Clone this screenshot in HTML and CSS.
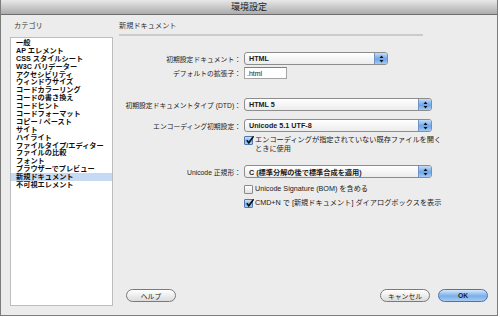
FILE: index.html
```html
<!DOCTYPE html>
<html lang="ja">
<head>
    <meta charset="UTF-8">
    <title>環境設定</title>
    <link rel="stylesheet" href="styles.css">
</head>
<body>
    <div class="window">
        <div class="titlebar">環境設定</div>
        <div class="content">
            <div class="sidebar">
                <div class="sidebar-title">カテゴリ</div>
                <ul class="category-list">
                    <li>一般</li>
                    <li>AP エレメント</li>
                    <li>CSS スタイルシート</li>
                    <li>W3C バリデーター</li>
                    <li>アクセシビリティ</li>
                    <li>ウィンドウサイズ</li>
                    <li>コードカラーリング</li>
                    <li>コードの書き換え</li>
                    <li>コードヒント</li>
                    <li>コードフォーマット</li>
                    <li>コピー / ペースト</li>
                    <li>サイト</li>
                    <li>ハイライト</li>
                    <li>ファイルタイプ/エディター</li>
                    <li>ファイルの比較</li>
                    <li>フォント</li>
                    <li>ブラウザーでプレビュー</li>
                    <li class="selected">新規ドキュメント</li>
                    <li>不可視エレメント</li>
                </ul>
            </div>
            <div class="panel">
                <div class="panel-title">新規ドキュメント</div>
                <div class="separator"></div>

                <div class="row row-doc">
                    <label>初期設定ドキュメント：</label>
                    <div class="select short"><span>HTML</span><i class="stepper"><svg width="5" height="8" viewBox="0 0 5 8"><path d="M2.5 0.5 L4.5 3 L0.5 3 Z M0.5 5 L4.5 5 L2.5 7.5 Z" fill="#111"/></svg></i></div>
                </div>
                <div class="row row-ext">
                    <label>デフォルトの拡張子：</label>
                    <div class="textbox">.html</div>
                </div>
                <div class="row row-dtd">
                    <label>初期設定ドキュメントタイプ (DTD)：</label>
                    <div class="select"><span>HTML 5</span><i class="stepper"><svg width="5" height="8" viewBox="0 0 5 8"><path d="M2.5 0.5 L4.5 3 L0.5 3 Z M0.5 5 L4.5 5 L2.5 7.5 Z" fill="#111"/></svg></i></div>
                </div>
                <div class="row row-enc">
                    <label>エンコーディング初期設定：</label>
                    <div class="select"><span>Unicode 5.1 UTF-8</span><i class="stepper"><svg width="5" height="8" viewBox="0 0 5 8"><path d="M2.5 0.5 L4.5 3 L0.5 3 Z M0.5 5 L4.5 5 L2.5 7.5 Z" fill="#111"/></svg></i></div>
                </div>
                <div class="check-row check-enc">
                    <i class="checkbox checked"><svg width="9" height="9" viewBox="0 0 9 9"><path d="M1.8 4.2 L3.8 6.8 L8.6 0.2" fill="none" stroke="#111" stroke-width="1.6"/></svg></i>
                    <span>エンコーディングが指定されていない既存ファイルを開く<br>ときに使用</span>
                </div>
                <div class="row row-norm">
                    <label>Unicode 正規形：</label>
                    <div class="select"><span>C (標準分解の後で標準合成を適用)</span><i class="stepper"><svg width="5" height="8" viewBox="0 0 5 8"><path d="M2.5 0.5 L4.5 3 L0.5 3 Z M0.5 5 L4.5 5 L2.5 7.5 Z" fill="#111"/></svg></i></div>
                </div>
                <div class="check-row check-bom">
                    <i class="checkbox"></i>
                    <span>Unicode Signature (BOM) を含める</span>
                </div>
                <div class="check-row check-cmd">
                    <i class="checkbox checked"><svg width="9" height="9" viewBox="0 0 9 9"><path d="M1.8 4.2 L3.8 6.8 L8.6 0.2" fill="none" stroke="#111" stroke-width="1.6"/></svg></i>
                    <span>CMD+N で [新規ドキュメント] ダイアログボックスを表示</span>
                </div>

                <div class="buttons">
                    <button class="btn">ヘルプ</button>
                    <div class="btn-group">
                        <button class="btn">キャンセル</button>
                        <button class="btn btn-ok">OK</button>
                    </div>
                </div>
            </div>
        </div>
    </div>
</body>
</html>
```

FILE: styles.css
```css
body {
    margin: 0;
    background-color: #ffffff;
    font-family: "Liberation Sans", "Noto Sans CJK JP", sans-serif;
    color: #1a1a1a;
}
.window {
    width: 496px;
    height: 315px;
    border: 1px solid #7c7c7c;
    border-top: none;
    background-color: #ececec;
    display: flex;
    flex-direction: column;
}
.titlebar {
    height: 14px;
    line-height: 14px;
    text-align: center;
    font-size: 9px;
    color: #222;
    background: linear-gradient(#e8e8e8, #acacac);
    border-bottom: 1px solid #6e6e6e;
}
.content {
    flex: 1;
    display: flex;
}
.sidebar {
    width: 103px;
    padding-left: 9px;
    display: flex;
    flex-direction: column;
}
.sidebar-title {
    height: 16px;
    padding: 6px 0 0 4px;
    font-size: 7.2px;
    line-height: 10px;
    color: #333;
}
.category-list {
    flex: 1;
    list-style: none;
    margin: 0 0 9px 0;
    padding: 1px 0 0 0;
    background-color: #fff;
    border: 1px solid #bdbdbd;
}
.category-list li {
    height: 7.9px;
    line-height: 7.9px;
    padding-left: 5px;
    font-size: 7.2px;
    font-weight: bold;
    color: #111;
    white-space: nowrap;
}
.category-list li.selected {
    background-color: #c6daf3;
}
.panel {
    flex: 1;
    padding: 0 9px 0 6px;
    display: flex;
    flex-direction: column;
}
.panel-title {
    height: 13px;
    padding-top: 6px;
    font-size: 7.2px;
    line-height: 10px;
    color: #333;
}
.separator {
    width: 304px;
    height: 2px;
    background-color: #cbcbcb;
}
.row {
    display: flex;
    align-items: center;
    height: 13px;
}
.row label {
    width: 122px;
    margin-right: 3px;
    text-align: right;
    font-size: 6.8px;
    white-space: nowrap;
    color: #222;
}
.row-doc { margin-top: 16px; }
.row-ext { margin-top: 2px; height: 12px; }
.row-dtd { margin-top: 19px; }
.row-enc { margin-top: 8px; }
.row-norm { margin-top: 12px; }
.select {
    box-sizing: border-box;
    width: 188px;
    height: 13px;
    display: flex;
    align-items: center;
    border: 1px solid #8d8d8d;
    border-radius: 3px;
    background: linear-gradient(#ffffff, #ececec);
    font-size: 7.2px;
    font-weight: bold;
    overflow: hidden;
}
.select.short {
    width: 144px;
}
.select span {
    flex: 1;
    padding-left: 4px;
    white-space: nowrap;
}
.stepper {
    width: 12px;
    height: 100%;
    display: flex;
    align-items: center;
    justify-content: center;
    background: linear-gradient(#c6dcf8, #6ea5e8 55%, #a3caf5);
    border-left: 1px solid #6f93c4;
}
.textbox {
    box-sizing: border-box;
    width: 43px;
    height: 12px;
    padding-left: 2px;
    background-color: #fff;
    border: 1px solid #a4a4a4;
    border-top-color: #7e7e7e;
    font-size: 7px;
    line-height: 11px;
}
.check-row {
    display: flex;
    align-items: flex-start;
    margin-left: 125px;
    font-size: 7.2px;
    line-height: 8.5px;
    white-space: nowrap;
}
.check-row span {
    margin-left: 2px;
}
.check-enc { margin-top: 4px; }
.check-bom { margin-top: 7px; }
.check-cmd { margin-top: 5px; }
.checkbox {
    box-sizing: border-box;
    width: 9px;
    height: 9px;
    flex: none;
    border: 1px solid #8a8a8a;
    border-radius: 1px;
    background: linear-gradient(#ffffff, #e2e2e2);
    display: flex;
    align-items: center;
    justify-content: center;
    overflow: visible;
}
.checkbox.checked {
    border-color: #4f78b0;
    background: linear-gradient(#d2e4f9, #7eb1ec 55%, #a8cdf6);
}
.checkbox svg {
    margin: -1px -2px 0 0;
}
.buttons {
    margin-top: auto;
    margin-bottom: 13px;
    padding-left: 7px;
    display: flex;
    justify-content: space-between;
    align-items: center;
}
.btn-group {
    display: flex;
    gap: 8px;
}
.btn {
    box-sizing: border-box;
    width: 50px;
    height: 13px;
    padding: 0;
    border: 1px solid #7a7a7a;
    border-radius: 7px;
    background: linear-gradient(#ffffff, #dcdcdc);
    font-family: inherit;
    font-size: 6.8px;
    color: #222;
}
.btn-ok {
    border-color: #4d73a8;
    background: linear-gradient(#d6e7fb, #7aaeea 55%, #a6cbf4);
    font-weight: bold;
}
```
